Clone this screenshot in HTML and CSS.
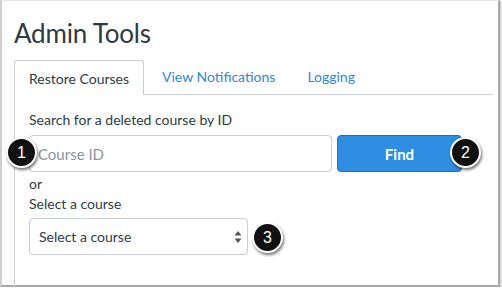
FILE: index.html
```html
<!DOCTYPE html>
<html lang="en">
<head>
    <meta charset="UTF-8">
    <title>Admin Tools</title>
    <link rel="stylesheet" href="styles.css">
</head>
<body>

    <div class="window">
        <h1>Admin Tools</h1>

        <div class="tabs">
            <div class="tab active">Restore Courses</div>
            <a class="tab" href="#">View Notifications</a>
            <a class="tab" href="#">Logging</a>
            <div class="tab-fill"></div>
        </div>

        <div class="panel">
            <label for="course-id">Search for a deleted course by ID</label>
            <div class="search-row">
                <div class="field">
                    <input type="text" id="course-id" placeholder="Course ID">
                    <span class="badge badge-left">1</span>
                </div>
                <div class="field">
                    <button id="find">Find</button>
                    <span class="badge badge-right">2</span>
                </div>
            </div>

            <div class="or">or</div>

            <label for="course-select">Select a course</label>
            <div class="field select-field">
                <div class="select" id="course-select">
                    Select a course
                    <svg class="arrows" width="8" height="14" viewBox="0 0 8 14">
                        <path d="M4 1 L7.5 5.5 L0.5 5.5 Z" fill="#555"/>
                        <path d="M4 13 L7.5 8.5 L0.5 8.5 Z" fill="#555"/>
                    </svg>
                </div>
                <span class="badge badge-select">3</span>
            </div>
        </div>
    </div>

</body>
</html>
```

FILE: styles.css
```css
body {
    margin: 0;
    font-family: Lato, "Open Sans", sans-serif;
    color: #2d3b45;
    background-color: #fff;
}

.window {
    width: 500px;
    height: 287px;
    box-sizing: border-box;
    border-top: 1px solid #e6e6e6;
    border-left: 2px solid #cfcfcf;
    border-right: 2px solid #a9a9a9;
    border-bottom: 2px solid #a9a9a9;
    box-shadow: 1px 1px 2px #bbb;
    padding: 0 5px 0 12px;
}

h1 {
    margin: 16px 0 0 0;
    font-size: 26px;
    font-weight: normal;
    line-height: 32px;
    letter-spacing: -0.2px;
}

.tabs {
    display: flex;
    margin-top: 11px;
    height: 35px;
}

.tab {
    font-size: 14px;
    line-height: 34px;
    padding: 0 16px;
    color: #2d88e0;
    text-decoration: none;
    border-bottom: 1px solid #c7cdd1;
}

.tab.active {
    color: #2d3b45;
    border: 1px solid #c7cdd1;
    border-bottom: none;
    border-radius: 3px 3px 0 0;
    padding: 0 14px;
    line-height: 35px;
}

.tab.active + .tab {
    padding-left: 18px;
}

.tab-fill {
    flex: 1;
    border-bottom: 1px solid #c7cdd1;
}

.panel {
    border-left: 1px solid #c7cdd1;
    height: 186px;
    padding: 15px 0 0 14px;
}

label {
    display: block;
    font-size: 14px;
    line-height: 20px;
}

.search-row {
    display: flex;
    gap: 5px;
    margin-top: 5px;
}

.field {
    position: relative;
}

input[type="text"] {
    width: 303px;
    height: 37px;
    box-sizing: border-box;
    border: 1px solid #c7cdd1;
    border-radius: 4px;
    padding: 0 8px;
    font-family: Lato, "Open Sans", sans-serif;
    font-size: 15px;
    color: #2d3b45;
}

input::placeholder {
    color: #8b969e;
}

button {
    width: 125px;
    height: 37px;
    background-color: #2e8fe2;
    border: 1px solid #1f6fb7;
    border-radius: 4px;
    color: #fff;
    font-family: Lato, "Open Sans", sans-serif;
    font-size: 15px;
    font-weight: bold;
}

.or {
    font-size: 14px;
    line-height: 20px;
    margin-top: 2px;
}

.select-field {
    width: 219px;
    margin-top: 4px;
}

.select {
    display: flex;
    align-items: center;
    justify-content: space-between;
    height: 37px;
    box-sizing: border-box;
    border: 1px solid #c7cdd1;
    border-radius: 4px;
    padding: 0 5px 0 9px;
    font-size: 14px;
    background-color: #fff;
}

.badge {
    position: absolute;
    width: 27px;
    height: 27px;
    border: 2px solid #fff;
    border-radius: 50%;
    background-color: #111;
    color: #fff;
    font-family: "Liberation Sans", Arial, sans-serif;
    font-size: 16px;
    line-height: 27px;
    text-align: center;
    box-shadow: 1px 2px 3px rgba(0, 0, 0, 0.55);
    top: 2px;
}

.badge-left {
    left: -23px;
}

.badge-right {
    right: -19px;
}

.badge-select {
    right: -35px;
    top: 4px;
}
```
